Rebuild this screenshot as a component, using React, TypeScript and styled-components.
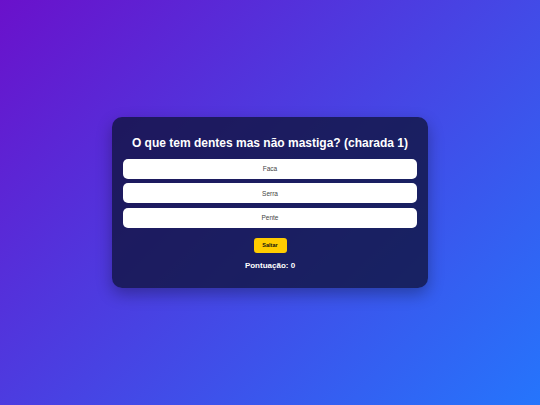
import React, { useState } from 'react'
import styled, { createGlobalStyle } from 'styled-components'

const GlobalStyle = createGlobalStyle`
  * { box-sizing: border-box; }
  html, body { margin: 0; padding: 0; }
  body {
    font-family: 'Liberation Sans', Arial, sans-serif;
    background: linear-gradient(135deg, #6a11cb 0%, #2575fc 100%);
    min-height: 100vh;
  }
`

const Page = styled.main`
  min-height: 100vh;
  display: flex;
  align-items: center;
  justify-content: center;
`

const Card = styled.section`
  width: 316px;
  padding: 17px 11px 16px;
  border-radius: 10px;
  background: rgba(16, 20, 64, 0.8);
  box-shadow: 0 6px 16px rgba(0, 0, 0, 0.3);
  display: flex;
  flex-direction: column;
  align-items: center;
  color: #fff;
`

const Question = styled.h2`
  margin: 0 0 6.5px;
  font-size: 12px;
  line-height: 18px;
  font-weight: bold;
  text-align: center;
  white-space: nowrap;
`

const Options = styled.div`
  width: 100%;
  display: flex;
  flex-direction: column;
  gap: 4.7px;
`

const Option = styled.button`
  width: 100%;
  height: 20px;
  border: none;
  border-radius: 5px;
  background: #fff;
  color: #444;
  font-family: inherit;
  font-size: 6.5px;
  cursor: pointer;
`

const SkipButton = styled.button`
  margin-top: 10px;
  width: 33px;
  height: 15px;
  padding: 0;
  border: none;
  border-radius: 3px;
  background: #ffcc00;
  color: #111;
  font-family: inherit;
  font-size: 5.5px;
  font-weight: bold;
  cursor: pointer;
`

const Score = styled.p`
  margin: 7px 0 0;
  font-size: 8px;
  line-height: 12px;
  font-weight: bold;
`

const options = ['Faca', 'Serra', 'Pente']

export default function App() {
  const [score, setScore] = useState(0)

  return (
    <>
      <GlobalStyle />
      <Page>
        <Card>
          <Question>O que tem dentes mas não mastiga? (charada 1)</Question>
          <Options>
            {options.map((opt) => (
              <Option key={opt} onClick={() => opt === 'Pente' && setScore(score + 1)}>
                {opt}
              </Option>
            ))}
          </Options>
          <SkipButton>Saltar</SkipButton>
          <Score>Pontuação: {score}</Score>
        </Card>
      </Page>
    </>
  )
}
